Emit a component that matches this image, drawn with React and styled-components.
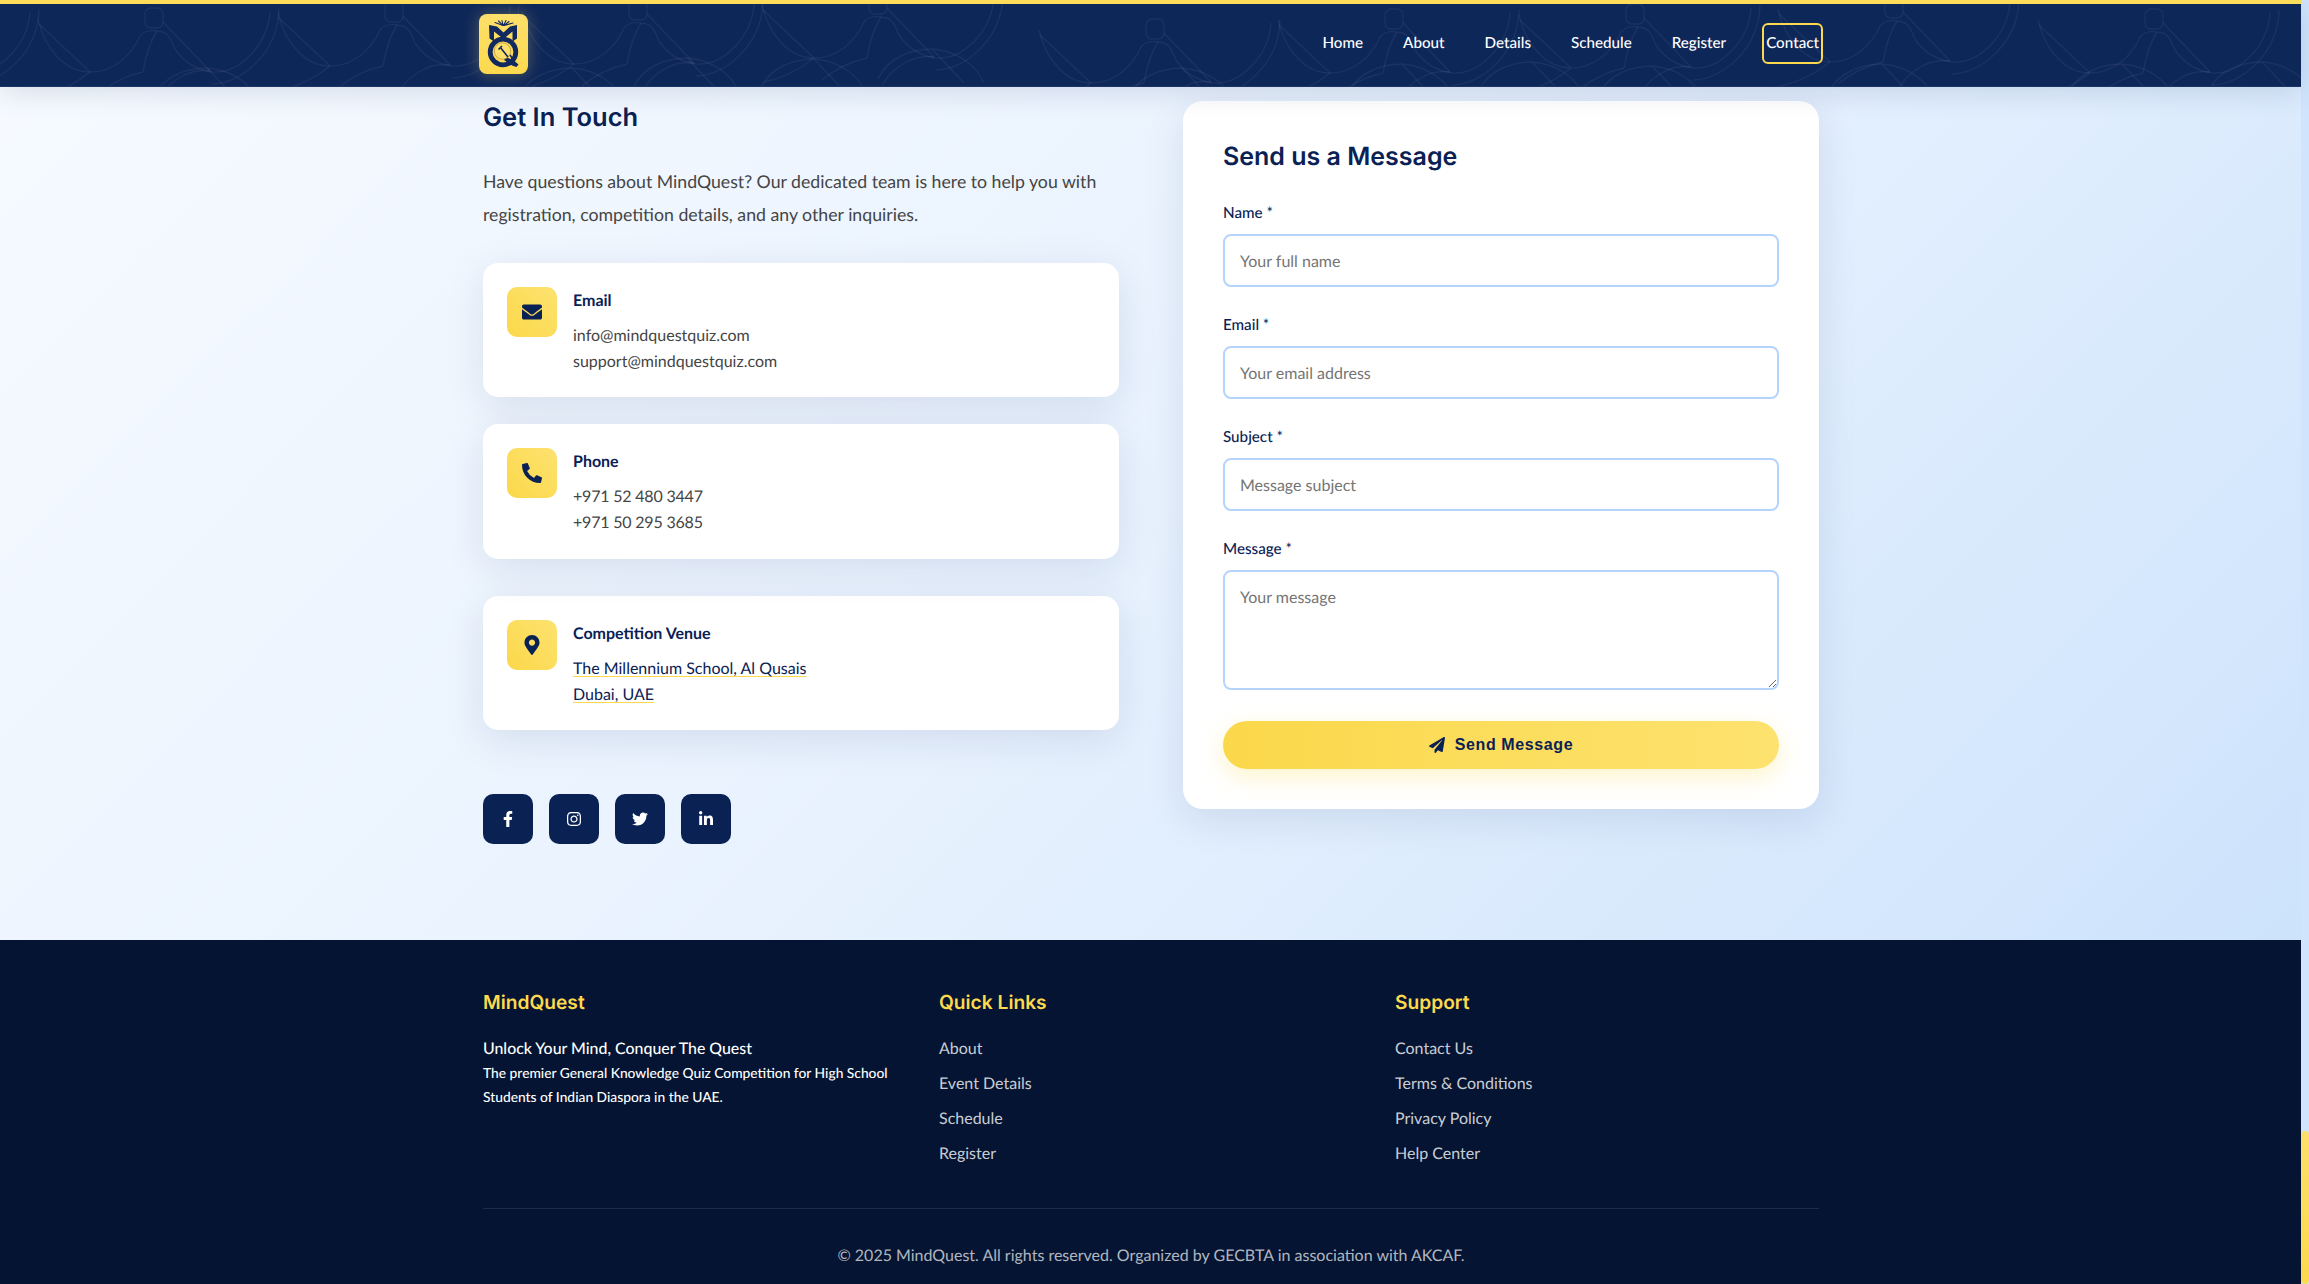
import React from "react";
import styled, { createGlobalStyle } from "styled-components";
import {
  FaEnvelope,
  FaPhoneAlt,
  FaMapMarkerAlt,
  FaPaperPlane,
  FaFacebookF,
  FaInstagram,
  FaTwitter,
  FaLinkedinIn,
} from "react-icons/fa";

const NAVY = "#0a2154";

const Global = createGlobalStyle`
  html, body { margin: 0; padding: 0; height: 100%; overflow: hidden; background: #d0e5fd; }
  * { box-sizing: border-box; }
  body {
    font-family: "Lato", "Liberation Sans", sans-serif;
    color: #444;
    text-rendering: geometricPrecision;
  }
  input, textarea { text-rendering: geometricPrecision; }
`;

const Shell = styled.div`
  display: flex;
  width: 2309px;
  height: 1284px;
  overflow: hidden;
`;
const Page = styled.div`
  flex: 1;
  min-width: 0;
  display: flex;
  flex-direction: column;
`;
const ScrollTrack = styled.div`
  width: 8px;
  display: flex;
  flex-direction: column;
  justify-content: flex-end;
  background: #d0e5fd;
`;
const ScrollThumb = styled.div`
  height: 153px;
  border-radius: 4px;
  background: linear-gradient(180deg, #fde06c, #fcd94d);
`;

const Nav = styled.header`
  position: relative;
  z-index: 5;
  height: 87px;
  flex: none;
  background: #0e2759;
  border-top: 4px solid #fddc5a;
  border-bottom: 1px solid #1c3568;
  box-shadow: 0 4px 30px rgba(10, 33, 84, 0.14);
`;
const NavPattern = styled.svg`
  position: absolute;
  inset: 0;
  width: 100%;
  height: 100%;
  pointer-events: none;
`;
const NavInner = styled.div`
  position: relative;
  height: 100%;
  width: 1344px;
  margin-left: 479px;
  display: flex;
  align-items: center;
  justify-content: space-between;
`;
const LogoTile = styled.div`
  width: 49px;
  height: 60px;
  margin-bottom: 2px;
  border-radius: 8px;
  background: linear-gradient(180deg, #fde06c, #fcd94d);
  box-shadow: 0 0 16px rgba(253, 224, 108, 0.3);
`;
const NavLinks = styled.nav`
  display: flex;
  align-items: center;
  gap: 32px;
  padding-bottom: 3px;
`;
const NavLink = styled.a`
  display: block;
  padding: 9px 2px;
  border: 2px solid ${(p) => (p.$active ? "#fcd94d" : "transparent")};
  border-radius: 6px;
  font-size: 15.2px;
  line-height: 19px;
  font-weight: 500;
  color: #fff;
  white-space: nowrap;
`;

const Main = styled.main`
  flex: 1;
  min-height: 0;
  background: linear-gradient(135deg, #f6faff 0%, #e8f2fe 50%, #cde3fc 100%);
  padding: 14px 0 0 483px;
`;
const Columns = styled.div`
  width: 1336px;
  display: grid;
  grid-template-columns: 1fr 1fr;
  gap: 64px;
  align-items: start;
`;
const Left = styled.section`
  display: flex;
  flex-direction: column;
`;
const Heading = styled.h2`
  margin: 0 0 ${(p) => p.$gap || 0}px;
  font-family: "Inter", "Liberation Sans", sans-serif;
  font-weight: 600;
  color: ${NAVY};
  font-size: ${(p) => p.$size}px;
  line-height: ${(p) => p.$line}px;
`;
const Intro = styled.p`
  margin: 31px 0 0;
  font-size: 17.7px;
  line-height: 32.6px;
  color: #444;
`;
const Card = styled.article`
  position: relative;
  z-index: ${(p) => p.$z || 0};
  display: flex;
  gap: 16px;
  align-items: flex-start;
  height: ${(p) => p.$height || 134}px;
  margin-top: ${(p) => p.$top}px;
  padding: 24px;
  border-radius: 15px;
  background: #fff;
  box-shadow: 0 10px 40px rgba(10, 33, 84, 0.1);
`;
const IconTile = styled.div`
  flex: none;
  width: 50px;
  height: 50px;
  border-radius: 10px;
  display: flex;
  align-items: center;
  justify-content: center;
  font-size: 20px;
  color: ${NAVY};
  background: linear-gradient(45deg, #fbd84a, #fde26f);
`;
const CardBody = styled.div`
  display: flex;
  flex-direction: column;
`;
const CardTitle = styled.h3`
  margin: 0 0 8px;
  font-size: 16px;
  line-height: 28px;
  font-weight: 700;
  color: ${NAVY};
`;
const CardLine = styled.p`
  margin: 0;
  font-size: 16px;
  line-height: 25.84px;
  letter-spacing: ${(p) => (p.$digits ? "-0.2px" : "0")};
  color: #444;
`;
const VenueLink = styled.a`
  color: ${NAVY};
  text-decoration: underline;
  text-decoration-color: #fcd94d;
  text-underline-offset: 2px;
`;
const Socials = styled.div`
  display: flex;
  gap: 16px;
  margin-top: 64px;
`;
const Social = styled.a`
  width: 50px;
  height: 50px;
  border-radius: 10px;
  display: flex;
  align-items: center;
  justify-content: center;
  font-size: 16px;
  color: #fff;
  background: ${NAVY};
`;

const FormCard = styled.form`
  display: flex;
  flex-direction: column;
  padding: 40px;
  border-radius: 20px;
  background: #fff;
  box-shadow: 0 10px 40px rgba(10, 33, 84, 0.1);
`;
const Field = styled.div`
  display: flex;
  flex-direction: column;
  margin-bottom: ${(p) => p.$bottom}px;
`;
const Label = styled.label`
  margin-bottom: 10px;
  font-size: 15.2px;
  line-height: 22px;
  font-weight: 500;
  color: ${NAVY};
`;
const fieldCss = `
  width: 100%;
  border: 2px solid #b5d4fd;
  border-radius: 8px;
  background: #fff;
  font-family: "Lato", sans-serif;
  font-size: 16px;
  line-height: 19px;
  color: #333;
  outline: none;
  &::placeholder { color: #757575; opacity: 1; }
`;
const Input = styled.input`
  ${fieldCss}
  height: 53px;
  padding: 16px 15px 14px;
`;
const TextArea = styled.textarea`
  ${fieldCss}
  display: block;
  height: 120px;
  padding: 16px 15px 14px;
  resize: vertical;
`;
const SendButton = styled.button`
  height: 48px;
  border: 0;
  border-radius: 24px;
  display: flex;
  align-items: center;
  justify-content: center;
  gap: 10px;
  font-family: "Liberation Sans", Arial, sans-serif;
  font-size: 16px;
  font-weight: 700;
  letter-spacing: 0.6px;
  color: ${NAVY};
  background: linear-gradient(90deg, #fbd84a, #fde26f);
  box-shadow: 0 8px 25px rgba(252, 217, 77, 0.3);
`;

const Footer = styled.footer`
  flex: none;
  height: 344px;
  background: #041432;
  padding: 48px 0 0 483px;
`;
const FooterInner = styled.div`
  width: 1336px;
`;
const FooterGrid = styled.div`
  display: grid;
  grid-template-columns: repeat(3, 1fr);
  gap: 32px;
  height: 221px;
  border-bottom: 1px solid rgba(255, 255, 255, 0.1);
`;
const FooterCol = styled.div`
  display: flex;
  flex-direction: column;
`;
const FooterTitle = styled.h4`
  margin: 0 0 20px;
  font-family: "Inter", "Liberation Sans", sans-serif;
  font-size: 19.2px;
  line-height: 29px;
  font-weight: 600;
  color: #fcd94d;
`;
const Tagline = styled.strong`
  font-size: 15.9px;
  line-height: 24px;
  font-weight: 500;
  color: #fff;
`;
const Blurb = styled.p`
  margin: 0;
  font-size: 13.8px;
  line-height: 24px;
  font-weight: 500;
  color: #fff;
`;
const FooterLinks = styled.ul`
  list-style: none;
  margin: 0;
  padding: 0;
  display: flex;
  flex-direction: column;
  gap: 11px;
`;
const FooterLink = styled.li`
  font-size: 16px;
  line-height: 24px;
  color: rgba(255, 255, 255, 0.8);
`;
const Copyright = styled.p`
  margin: 0;
  padding-top: 35px;
  text-align: center;
  font-size: 16px;
  line-height: 24px;
  color: rgba(255, 255, 255, 0.7);
`;

function Motif({ x, y }) {
  return (
    <g transform={`translate(${x} ${y})`}>
      <rect x="145" y="4" width="18" height="20" rx="6" />
      <path d="M38 15C45 45 65 68 90 68C115 68 132 50 140 32C144 27 150 26 157 27C170 28 170 35 175 45C185 60 198 66 212 68C240 70 268 40 270 8" />
      <path d="M39 20L90 68M163 18L210 67M143 68C146 50 150 38 157 27M143 68C125 72 110 80 98 90M90 68C75 80 60 88 40 92" />
      <path d="M210 67C190 64 170 76 158 95M212 80C240 80 278 50 279 5" />
    </g>
  );
}

function Arch({ x, y }) {
  return (
    <g transform={`translate(${x} ${y})`}>
      <path d="M-52 30C-42 8 -18 0 2 0C28 2 46 16 54 34M2 0L34 34" />
    </g>
  );
}

function Pattern() {
  const motifs = [
    [-240, 0], [0, 0], [240, -6], [484, -8], [724, -14], [1001, 11],
    [1240, 1], [1481, -4], [1740, -10], [2000, 1],
  ];
  const arches = [
    [205, 64], [570, 64], [685, 54], [812, 55], [930, 45], [1180, 64],
    [1400, 60], [1530, 58], [1650, 62], [1880, 60], [2120, 60], [2260, 58],
  ];
  return (
    <NavPattern aria-hidden="true">
      <g fill="none" stroke="#ffffff" strokeOpacity="0.055" strokeWidth="1.4">
        {motifs.map(([x, y]) => (
          <Motif key={x} x={x} y={y} />
        ))}
        {arches.map(([x, y]) => (
          <Arch key={x} x={x} y={y} />
        ))}
      </g>
    </NavPattern>
  );
}

function Logo() {
  return (
    <LogoTile>
      <svg width="49" height="60" viewBox="0 0 49 60" aria-hidden="true">
        <g fill="none" stroke="#12295f" strokeLinecap="round">
          <path strokeWidth="1.1" d="M24 11.5L16 8.5M24 11.5L19.5 7M24 11.5L23 6.5M24.5 11.5L27 6.5M25 11.5L30 7.5M25 11.5L34 9" />
        </g>
        <path fill="#12295f" d="M10 11L18 12.5L24.5 18.5L31 12.5L38 11V24.5L33.5 27.5V17.5L24.5 25L15 17.5V27.5L10.5 24.5Z" />
        <circle cx="24" cy="38" r="12.8" fill="none" stroke="#12295f" strokeWidth="4.8" />
        <path fill="#12295f" d="M27 43L35 46.5L39.5 50.5L37.5 53L33 51.5L25 46Z" />
        <circle cx="23.5" cy="37" r="8.2" fill="#fde06c" stroke="#b89c3a" strokeWidth="0.8" />
        <path fill="none" stroke="#12295f" strokeWidth="1.6" d="M21 33L29 43M19.5 35.5L23 32M31 41L34 45" />
      </svg>
    </LogoTile>
  );
}

const navItems = ["Home", "About", "Details", "Schedule", "Register", "Contact"];
const quickLinks = ["About", "Event Details", "Schedule", "Register"];
const supportLinks = ["Contact Us", "Terms & Conditions", "Privacy Policy", "Help Center"];

export default function App() {
  return (
    <Shell>
      <Global />
      <Page>
        <Nav>
          <Pattern />
          <NavInner>
            <Logo />
            <NavLinks>
              {navItems.map((item) => (
                <NavLink key={item} $active={item === "Contact"}>
                  {item}
                </NavLink>
              ))}
            </NavLinks>
          </NavInner>
        </Nav>
        <Main>
          <Columns>
            <Left>
              <Heading $size={25.5} $line={34}>Get In Touch</Heading>
              <Intro>
                Have questions about MindQuest? Our dedicated team is here to help you with
                registration, competition details, and any other inquiries.
              </Intro>
              <Card $top={32}>
                <IconTile><FaEnvelope /></IconTile>
                <CardBody>
                  <CardTitle>Email</CardTitle>
                  <CardLine>info@mindquestquiz.com</CardLine>
                  <CardLine>support@mindquestquiz.com</CardLine>
                </CardBody>
              </Card>
              <Card $top={27} $z={1} $height={135}>
                <IconTile><FaPhoneAlt /></IconTile>
                <CardBody>
                  <CardTitle>Phone</CardTitle>
                  <CardLine $digits>+971 52 480 3447</CardLine>
                  <CardLine $digits>+971 50 295 3685</CardLine>
                </CardBody>
              </Card>
              <Card $top={37}>
                <IconTile><FaMapMarkerAlt /></IconTile>
                <CardBody>
                  <CardTitle>Competition Venue</CardTitle>
                  <CardLine>
                    <VenueLink>
                      The Millennium School, Al Qusais
                      <br />
                      Dubai, UAE
                    </VenueLink>
                  </CardLine>
                </CardBody>
              </Card>
              <Socials>
                <Social><FaFacebookF /></Social>
                <Social><FaInstagram /></Social>
                <Social><FaTwitter /></Social>
                <Social><FaLinkedinIn /></Social>
              </Socials>
            </Left>
            <FormCard>
              <Heading $size={25} $line={32} $gap={29}>Send us a Message</Heading>
              <Field $bottom={27}>
                <Label>Name *</Label>
                <Input placeholder="Your full name" />
              </Field>
              <Field $bottom={27}>
                <Label>Email *</Label>
                <Input placeholder="Your email address" />
              </Field>
              <Field $bottom={27}>
                <Label>Subject *</Label>
                <Input placeholder="Message subject" />
              </Field>
              <Field $bottom={31}>
                <Label>Message *</Label>
                <TextArea placeholder="Your message" />
              </Field>
              <SendButton type="button">
                <FaPaperPlane />
                Send Message
              </SendButton>
            </FormCard>
          </Columns>
        </Main>
        <Footer>
          <FooterInner>
            <FooterGrid>
              <FooterCol>
                <FooterTitle>MindQuest</FooterTitle>
                <Tagline>Unlock Your Mind, Conquer The Quest</Tagline>
                <Blurb>
                  The premier General Knowledge Quiz Competition for High School
                  <br />
                  Students of Indian Diaspora in the UAE.
                </Blurb>
              </FooterCol>
              <FooterCol>
                <FooterTitle>Quick Links</FooterTitle>
                <FooterLinks>
                  {quickLinks.map((l) => <FooterLink key={l}>{l}</FooterLink>)}
                </FooterLinks>
              </FooterCol>
              <FooterCol>
                <FooterTitle>Support</FooterTitle>
                <FooterLinks>
                  {supportLinks.map((l) => <FooterLink key={l}>{l}</FooterLink>)}
                </FooterLinks>
              </FooterCol>
            </FooterGrid>
            <Copyright>
              © 2025 MindQuest. All rights reserved. Organized by GECBTA in association with AKCAF.
            </Copyright>
          </FooterInner>
        </Footer>
      </Page>
      <ScrollTrack>
        <ScrollThumb />
      </ScrollTrack>
    </Shell>
  );
}
